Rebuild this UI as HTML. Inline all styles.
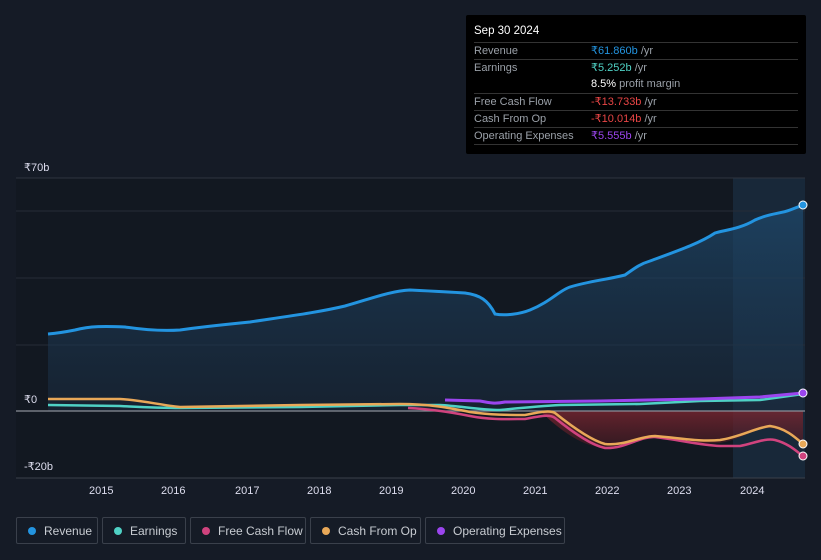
<!DOCTYPE html>
<html><head><meta charset="utf-8"><style>
body{margin:0;background:#151b26;width:821px;height:560px;overflow:hidden;font-family:"Liberation Sans",sans-serif;position:relative}
.tt{position:absolute;left:466px;top:15px;width:340px;height:139px;background:#000;border-radius:2px;color:#9aa0a8;font-size:11px}
.tt .h{color:#fff;font-size:11.5px;position:absolute;left:8px;top:10px}
.row{position:absolute;left:8px;width:324px;border-top:1px solid #333;height:16px;line-height:16px}
.row span{position:absolute;left:117px}
.lg{position:absolute;top:517px;height:27px;border:1px solid #3a404b;border-radius:2px;color:#c8ccd2;font-size:12px;line-height:27px;box-sizing:border-box;padding-left:27px}
.lg i{position:absolute;left:11px;top:9px;width:8px;height:8px;border-radius:50%}
.ax{position:absolute;color:#dde;font-size:11px}
</style></head><body>
<svg width="821" height="560" style="position:absolute;left:0;top:0">
<defs>
<linearGradient id="rg" x1="0" y1="0" x2="0" y2="1"><stop offset="0" stop-color="#1e4a6e" stop-opacity=".7"/><stop offset="1" stop-color="#1b2c40" stop-opacity=".5"/></linearGradient>
<linearGradient id="ng" x1="0" y1="0" x2="0" y2="1"><stop offset="0" stop-color="#7a2630" stop-opacity=".8"/><stop offset="1" stop-color="#4a1a22" stop-opacity=".6"/></linearGradient>
</defs>
<rect x="16" y="178" width="789" height="300" fill="#121821"/>
<rect x="733" y="178" width="72" height="300" fill="#1a2d40" opacity=".8"/>
<line x1="16" y1="178" x2="805" y2="178" stroke="#2e3540"/>
<line x1="16" y1="211" x2="805" y2="211" stroke="#262d38"/>
<line x1="16" y1="278" x2="805" y2="278" stroke="#262d38"/>
<line x1="16" y1="345" x2="805" y2="345" stroke="#262d38"/>
<line x1="16" y1="478" x2="805" y2="478" stroke="#3a404b"/>
<path d="M48 334 C60 333 65 332 75 330 C90 326 105 326 125 327 C145 330 165 331 180 330 C200 327 220 325 250 322 C290 316 320 312 345 306 C370 299 390 291 410 290 C430 291 450 292 465 293 C480 295 488 300 495 314 C505 316 520 314 530 310 C550 302 560 290 570 287 C590 281 605 280 625 275 C635 268 640 264 650 261 C680 250 700 243 715 233 C725 230 740 229 755 220 C770 213 780 214 790 210 L803 205 L803 411 L48 411Z" fill="url(#rg)"/>
<path d="M48 334 C60 333 65 332 75 330 C90 326 105 326 125 327 C145 330 165 331 180 330 C200 327 220 325 250 322 C290 316 320 312 345 306 C370 299 390 291 410 290 C430 291 450 292 465 293 C480 295 488 300 495 314 C505 316 520 314 530 310 C550 302 560 290 570 287 C590 281 605 280 625 275 C635 268 640 264 650 261 C680 250 700 243 715 233 C725 230 740 229 755 220 C770 213 780 214 790 210 L803 205" fill="none" stroke="#2394e0" stroke-width="3"/>
<path d="M540 411 C560 430 580 445 600 447 C620 448 640 437 655 437 C680 440 700 445 720 443 C740 440 755 428 770 428 C785 430 795 437 803 444 L803 411Z" fill="url(#ng)"/>
<line x1="16" y1="411" x2="805" y2="411" stroke="#8a8f98" stroke-width="1.2"/>
<path d="M48 405 L120 406 C140 407 160 408 180 408 L300 407 L400 405 L440 405 C460 406 480 410 500 410 C520 408 540 406 560 405 L640 404 L700 401 L760 400 L803 394" fill="none" stroke="#4fd1c5" stroke-width="2.5"/>
<path d="M445 400 L480 401 C490 403 495 404 505 402 L600 401 L700 399 L760 397 L803 393" fill="none" stroke="#9b45ee" stroke-width="3"/>
<path d="M408 408 C430 409 450 412 470 416 C490 420 510 419 525 419 C540 416 550 414 555 418 C570 430 590 445 605 448 C625 449 640 436 655 437 C680 440 700 445 720 446 L740 446 C755 443 765 438 775 440 C790 444 797 452 803 456" fill="none" stroke="#d0437e" stroke-width="2.5"/>
<path d="M48 399 L120 399 C140 400 160 405 180 407 L300 405 L400 404 C430 404 450 408 470 412 C490 415 510 415 525 415 C540 412 550 410 555 413 C570 425 590 440 605 444 C625 446 640 436 655 436 C680 438 700 442 720 440 C740 437 755 428 770 426 C785 428 795 437 803 444" fill="none" stroke="#e8a858" stroke-width="2.5"/>
<circle cx="803" cy="205" r="4" fill="#2394e0" stroke="#fff" stroke-width="1"/>
<circle cx="803" cy="393" r="4" fill="#9b45ee" stroke="#fff" stroke-width="1"/>
<circle cx="803" cy="444" r="4" fill="#e8a858" stroke="#fff" stroke-width="1"/>
<circle cx="803" cy="456" r="4" fill="#d0437e" stroke="#fff" stroke-width="1"/>
</svg>
<div class="ax" style="left:24px;top:161px">₹70b</div>
<div class="ax" style="left:24px;top:393px">₹0</div>
<div class="ax" style="left:24px;top:460px">-₹20b</div>
<div class="ax" style="left:89px;top:485px">2015</div>
<div class="ax" style="left:161px;top:485px">2016</div>
<div class="ax" style="left:235px;top:485px">2017</div>
<div class="ax" style="left:307px;top:485px">2018</div>
<div class="ax" style="left:379px;top:485px">2019</div>
<div class="ax" style="left:451px;top:485px">2020</div>
<div class="ax" style="left:523px;top:485px">2021</div>
<div class="ax" style="left:595px;top:485px">2022</div>
<div class="ax" style="left:667px;top:485px">2023</div>
<div class="ax" style="left:740px;top:485px">2024</div>
<div class="tt">
<div class="h">Sep 30 2024</div>
<div class="row" style="top:27px">Revenue<span style="color:#2394e0">₹61.860b <b style="color:#9aa0a8;font-weight:normal">/yr</b></span></div>
<div class="row" style="top:44px">Earnings<span style="color:#4fd1c5">₹5.252b <b style="color:#9aa0a8;font-weight:normal">/yr</b></span></div>
<div class="row" style="top:61px;border:0"><span style="color:#fff">8.5% <b style="color:#9aa0a8;font-weight:normal">profit margin</b></span></div>
<div class="row" style="top:78px">Free Cash Flow<span style="color:#e84545">-₹13.733b <b style="color:#9aa0a8;font-weight:normal">/yr</b></span></div>
<div class="row" style="top:95px">Cash From Op<span style="color:#e84545">-₹10.014b <b style="color:#9aa0a8;font-weight:normal">/yr</b></span></div>
<div class="row" style="top:112px">Operating Expenses<span style="color:#9b45ee">₹5.555b <b style="color:#9aa0a8;font-weight:normal">/yr</b></span></div>
<div class="row" style="top:129px;height:0"></div>
</div>
<div class="lg" style="left:16px;width:82px"><i style="background:#2394e0"></i>Revenue</div>
<div class="lg" style="left:102px;width:84px"><i style="background:#4fd1c5"></i>Earnings</div>
<div class="lg" style="left:190px;width:116px"><i style="background:#d0437e"></i>Free Cash Flow</div>
<div class="lg" style="left:310px;width:111px"><i style="background:#e8a858"></i>Cash From Op</div>
<div class="lg" style="left:425px;width:140px"><i style="background:#9b45ee"></i>Operating Expenses</div>
</body></html>
